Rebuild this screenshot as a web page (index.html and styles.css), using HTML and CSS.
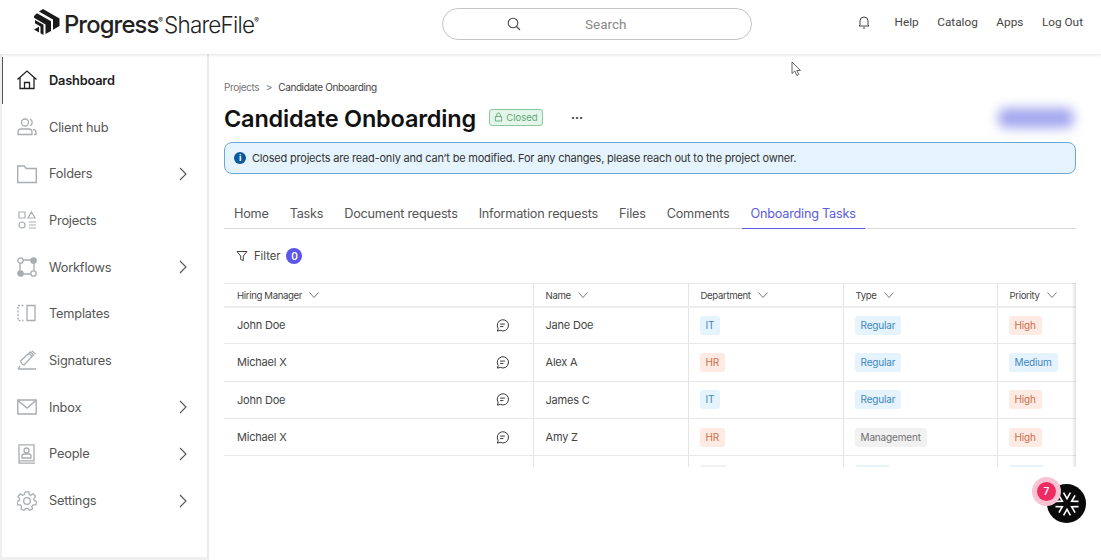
FILE: index.html
```html
<!DOCTYPE html>
<html lang="en">
<head>
    <meta charset="UTF-8">
    <meta name="viewport" content="width=device-width, initial-scale=1.0">
    <title>Candidate Onboarding</title>
    <link rel="stylesheet" href="styles.css">
</head>
<body>

    <header class="topbar">
        <div class="logo">
            <svg class="logo-mark" viewBox="0 0 26 26" width="26" height="26" fill="#1a1a1a">
                <path d="M9 0 25.500 9.500V17L19 20.800V10.500L5 2.600Z"/>
                <path d="M3 4.300 17 12.300V21.900L11.500 25V15.500L0 8.800V7Z"/>
                <path d="M1 11 9.500 15.800V26L6.500 24.300V17.500L1 14.300Z"/>
                <path d="M0 20.500 5 17.700V23.400Z"/>
            </svg>
            <span class="logo-progress">Progress</span><span class="logo-reg">®</span><span class="logo-share">ShareFile</span><span class="logo-reg">®</span>
        </div>
        <div class="search">
            <svg class="search-icon" viewBox="0 0 14 14" width="14" height="14" fill="none" stroke="#444" stroke-width="1.100">
                <circle cx="6" cy="6" r="4.800"/><path d="M9.500 9.500 13 13"/>
            </svg>
            <span class="search-text">Search</span>
        </div>
        <nav class="top-links">
            <svg class="bell" viewBox="0 0 12 14" width="12" height="14" fill="none" stroke="#444" stroke-width="1">
                <path d="M2 10V6a4 4 0 0 1 8 0v4l1 1H1ZM5 13h2"/>
            </svg>
            <a>Help</a>
            <a>Catalog</a>
            <a>Apps</a>
            <a>Log Out</a>
        </nav>
    </header>

    <div class="layout">
        <aside class="sidebar">
            <a class="nav-item active">
                <svg class="nav-icon" viewBox="0 0 20 20" fill="none" stroke="#222" stroke-width="1.300"><path d="M0.500 9.500 10 1 19.500 9.500M3 7.500V18.500H17V7.500M7.500 18.500V12.500H12.500V18.500"/></svg>
                <span>Dashboard</span>
            </a>
            <a class="nav-item">
                <svg class="nav-icon" viewBox="0 0 20 20" fill="none" stroke="#a9adb0" stroke-width="1.300"><circle cx="8" cy="5.500" r="3.500"/><path d="M1 17.500v-2.500a3 3 0 0 1 3-3h8a3 3 0 0 1 3 3v2.500ZM13 2.200a3.500 3.500 0 0 1 0 6.500M16 12.500a3 3 0 0 1 3 3v2h-2"/></svg>
                <span>Client hub</span>
            </a>
            <a class="nav-item">
                <svg class="nav-icon" viewBox="0 0 20 20" fill="none" stroke="#a9adb0" stroke-width="1.400"><path d="M0.700 2h6.500l2 2.500h10.100v14H0.700Z"/></svg>
                <span>Folders</span>
                <svg class="chevron" viewBox="0 0 8 14" fill="none" stroke="#555" stroke-width="1.100"><path d="M1 1 7 7 1 13"/></svg>
            </a>
            <a class="nav-item">
                <svg class="nav-icon" viewBox="0 0 20 20" fill="none" stroke="#a9adb0" stroke-width="1.200"><path d="M2 2h6v6H2ZM14.500 2 18 8h-7ZM12 12h7M12 15h7M12 18h7"/><circle cx="5" cy="15" r="3"/></svg>
                <span>Projects</span>
            </a>
            <a class="nav-item">
                <svg class="nav-icon" viewBox="0 0 20 20" fill="none" stroke="#a9adb0" stroke-width="1.300"><path d="M6 3h8M3 6v8M17 6v8M6 17h8"/><circle cx="3.500" cy="3.500" r="2.700"/><circle cx="16.500" cy="3.500" r="2.700" fill="#a9adb0"/><circle cx="3.500" cy="16.500" r="2.700" fill="#a9adb0"/><circle cx="16.500" cy="16.500" r="2.700"/></svg>
                <span>Workflows</span>
                <svg class="chevron" viewBox="0 0 8 14" fill="none" stroke="#555" stroke-width="1.100"><path d="M1 1 7 7 1 13"/></svg>
            </a>
            <a class="nav-item">
                <svg class="nav-icon" viewBox="0 0 20 20" fill="none" stroke="#a9adb0" stroke-width="1.300"><path d="M10 1.500h8v15h-8Z"/><path d="M6.500 1.500H1v15h5.500" stroke-dasharray="2 1.500"/></svg>
                <span>Templates</span>
            </a>
            <a class="nav-item">
                <svg class="nav-icon" viewBox="0 0 20 20" fill="none" stroke="#a9adb0" stroke-width="1.300"><path d="M5 14 3.500 11 13.500 2l3 3L7 15ZM12 3.500l3.500 3.500M15 1l3.500 3M1 19h18M1 19l2-3"/></svg>
                <span>Signatures</span>
            </a>
            <a class="nav-item">
                <svg class="nav-icon" viewBox="0 0 20 20" fill="none" stroke="#a9adb0" stroke-width="1.400"><path d="M0.800 3h18.400v14H0.800ZM1.500 4 10 11l8.500-7"/></svg>
                <span>Inbox</span>
                <svg class="chevron" viewBox="0 0 8 14" fill="none" stroke="#555" stroke-width="1.100"><path d="M1 1 7 7 1 13"/></svg>
            </a>
            <a class="nav-item">
                <svg class="nav-icon" viewBox="0 0 20 20" fill="none" stroke="#a9adb0" stroke-width="1.300"><path d="M2 0.800h15v16H2ZM2 16.800v2.400h16"/><circle cx="9.500" cy="6.500" r="2.500"/><path d="M5 14v-2a2 2 0 0 1 2-2h5a2 2 0 0 1 2 2v2Z"/></svg>
                <span>People</span>
                <svg class="chevron" viewBox="0 0 8 14" fill="none" stroke="#555" stroke-width="1.100"><path d="M1 1 7 7 1 13"/></svg>
            </a>
            <a class="nav-item">
                <svg class="nav-icon" viewBox="0 0 20 20" fill="none" stroke="#a9adb0" stroke-width="1.300"><circle cx="10" cy="10" r="3.300"/><path d="M8.300 0.800h3.400l.5 2.700 1.700.8 2.400-1.400 2.200 2.700-1.700 2.100.4 1.800 2.400 1.100-.8 3.300-2.700 0-1.200 1.500.6 2.600-3.100 1.400-1.700-2.100h-1.900l-1.700 2.100-3.100-1.400.6-2.600-1.200-1.500-2.700 0-.8-3.300 2.400-1.100.4-1.800-1.700-2.100 2.200-2.700 2.400 1.400 1.700-.8Z"/></svg>
                <span>Settings</span>
                <svg class="chevron" viewBox="0 0 8 14" fill="none" stroke="#555" stroke-width="1.100"><path d="M1 1 7 7 1 13"/></svg>
            </a>
        </aside>

        <main class="content">
            <div class="breadcrumb">
                <span class="crumb-link">Projects</span>
                <span class="crumb-sep">&gt;</span>
                <span>Candidate Onboarding</span>
            </div>

            <div class="title-row">
                <h1>Candidate Onboarding</h1>
                <span class="closed-badge">
                    <svg viewBox="0 0 10 11" width="9" height="10" fill="none" stroke="#5fa877" stroke-width="1"><path d="M1.500 5h7v5h-7ZM3 5V3a2 2 0 0 1 4 0v2"/></svg>
                    Closed
                </span>
                <span class="more">···</span>
                <div class="blurred"></div>
            </div>

            <div class="alert">
                <span class="alert-icon">i</span>
                Closed projects are read-only and can’t be modified. For any changes, please reach out to the project owner.
            </div>

            <div class="tabs">
                <a class="tab">Home</a>
                <a class="tab">Tasks</a>
                <a class="tab">Document requests</a>
                <a class="tab">Information requests</a>
                <a class="tab">Files</a>
                <a class="tab">Comments</a>
                <a class="tab selected">Onboarding Tasks</a>
            </div>

            <div class="filter">
                <svg viewBox="0 0 12 12" width="12" height="12" fill="none" stroke="#444" stroke-width="1"><path d="M1 1.500h10L7.300 6v4.500L4.700 9.500V6Z"/></svg>
                <span>Filter</span>
                <span class="filter-count">0</span>
            </div>

            <div class="table-wrap">
                <table class="grid">
                    <thead>
                        <tr>
                            <th class="col-manager">Hiring Manager <svg class="sort" viewBox="0 0 10 6"><path d="M0.500 0.500 5 5.500 9.500 0.500"/></svg></th>
                            <th class="col-name">Name <svg class="sort" viewBox="0 0 10 6"><path d="M0.500 0.500 5 5.500 9.500 0.500"/></svg></th>
                            <th class="col-dept">Department <svg class="sort" viewBox="0 0 10 6"><path d="M0.500 0.500 5 5.500 9.500 0.500"/></svg></th>
                            <th class="col-type">Type <svg class="sort" viewBox="0 0 10 6"><path d="M0.500 0.500 5 5.500 9.500 0.500"/></svg></th>
                            <th class="col-priority">Priority <svg class="sort" viewBox="0 0 10 6"><path d="M0.500 0.500 5 5.500 9.500 0.500"/></svg></th>
                        </tr>
                    </thead>
                    <tbody>
                        <tr>
                            <td><div class="manager">John Doe <svg class="comment" viewBox="0 0 12 12"><path d="M1.300 11.200 2 8.700A5.200 5.200 0 1 1 4 10.500ZM3.800 4.700h4.400M3.800 7h3"/></svg></div></td>
                            <td>Jane Doe</td>
                            <td><span class="tag blue">IT</span></td>
                            <td><span class="tag blue">Regular</span></td>
                            <td><span class="tag red">High</span></td>
                        </tr>
                        <tr>
                            <td><div class="manager">Michael X <svg class="comment" viewBox="0 0 12 12"><path d="M1.300 11.200 2 8.700A5.200 5.200 0 1 1 4 10.500ZM3.800 4.700h4.400M3.800 7h3"/></svg></div></td>
                            <td>Alex A</td>
                            <td><span class="tag red">HR</span></td>
                            <td><span class="tag blue">Regular</span></td>
                            <td><span class="tag blue">Medium</span></td>
                        </tr>
                        <tr>
                            <td><div class="manager">John Doe <svg class="comment" viewBox="0 0 12 12"><path d="M1.300 11.200 2 8.700A5.200 5.200 0 1 1 4 10.500ZM3.800 4.700h4.400M3.800 7h3"/></svg></div></td>
                            <td>James C</td>
                            <td><span class="tag blue">IT</span></td>
                            <td><span class="tag blue">Regular</span></td>
                            <td><span class="tag red">High</span></td>
                        </tr>
                        <tr>
                            <td><div class="manager">Michael X <svg class="comment" viewBox="0 0 12 12"><path d="M1.300 11.200 2 8.700A5.200 5.200 0 1 1 4 10.500ZM3.800 4.700h4.400M3.800 7h3"/></svg></div></td>
                            <td>Amy Z</td>
                            <td><span class="tag red">HR</span></td>
                            <td><span class="tag gray">Management</span></td>
                            <td><span class="tag red">High</span></td>
                        </tr>
                        <!-- row cut off by the scroll area -->
                        <tr>
                            <td></td>
                            <td></td>
                            <td><span class="tag gray">&nbsp;&nbsp;&nbsp;&nbsp;&nbsp;&nbsp;</span></td>
                            <td><span class="tag blue">&nbsp;&nbsp;&nbsp;&nbsp;&nbsp;&nbsp;&nbsp;&nbsp;&nbsp;</span></td>
                            <td><span class="tag blue">&nbsp;&nbsp;&nbsp;&nbsp;&nbsp;&nbsp;&nbsp;&nbsp;&nbsp;</span></td>
                        </tr>
                    </tbody>
                </table>
                <div class="edge-shadow"></div>
            </div>
        </main>
    </div>

    <!-- mouse pointer caught in the screenshot -->
    <svg class="pointer" viewBox="0 0 12 16" width="12" height="16" fill="#fff" stroke="#444" stroke-width="0.800"><path d="M1 1V12.500L3.800 10 5.800 14.500 7.800 13.500 5.800 9.500H9.500Z"/></svg>

    <div class="assistant">
        <svg viewBox="0 0 26 26" width="28" height="28" fill="none" stroke="#fff" stroke-width="1.500">
            <path d="M9.800 2.500 13 8 16.200 2.500"/>
            <path d="M9.800 2.500 13 8 16.200 2.500" transform="rotate(60 13 13)"/>
            <path d="M9.800 2.500 13 8 16.200 2.500" transform="rotate(120 13 13)"/>
            <path d="M9.800 2.500 13 8 16.200 2.500" transform="rotate(180 13 13)"/>
            <path d="M9.800 2.500 13 8 16.200 2.500" transform="rotate(240 13 13)"/>
            <path d="M9.800 2.500 13 8 16.200 2.500" transform="rotate(300 13 13)"/>
        </svg>
        <span class="assistant-count">7</span>
    </div>

</body>
</html>
```

FILE: styles.css
```css
* {
    box-sizing: border-box;
}

body {
    font-family: 'Inter', sans-serif;
    background-color: #fff;
    color: #333;
    margin: 0;
    height: 560px;
    overflow: hidden;
}

/* top bar */
.topbar {
    height: 54px;
    display: flex;
    align-items: center;
    background-color: #fff;
    box-shadow: 0 1px 3px rgba(0, 0, 0, 0.12);
    position: relative;
    z-index: 2;
}

.logo {
    width: 442px;
    padding-left: 34px;
    padding-bottom: 6px;
    display: flex;
    align-items: center;
    color: #222;
    white-space: nowrap;
}

.logo-mark {
    margin-right: 4px;
    margin-top: -4px;
}

.logo-progress {
    font-size: 23.800px;
    font-weight: 500;
    letter-spacing: -0.900px;
}

.logo-share {
    font-size: 22.500px;
    font-weight: 300;
    letter-spacing: -0.800px;
    margin-left: 1px;
}

.logo-reg {
    font-size: 7px;
    align-self: flex-start;
    margin-top: 6px;
}

.search {
    width: 310px;
    height: 32px;
    margin-top: -6px;
    border: 1px solid #c4c4c4;
    border-radius: 16px;
    display: flex;
    align-items: center;
    padding-left: 64px;
}

.search-text {
    margin-left: 64px;
    font-family: 'Roboto', sans-serif;
    font-size: 13.500px;
    color: #888;
}

.top-links {
    margin-left: auto;
    margin-right: 18px;
    margin-top: -11px;
    display: flex;
    align-items: center;
    font-family: 'Roboto', sans-serif;
    font-size: 11.800px;
    color: #444;
    gap: 18.500px;
}

.bell {
    margin-right: 6px;
}

/* page body */
.layout {
    display: flex;
    height: 506px;
}

.sidebar {
    width: 209px;
    height: 506px;
    padding-top: 3px;
    border-left: 2px solid #efefef;
    border-right: 2px solid #e9e9e9;
    border-bottom: 3px solid #efefef;
    flex-shrink: 0;
}

.nav-item {
    height: 46.700px;
    display: flex;
    align-items: center;
    padding-left: 15px;
    padding-right: 20px;
    font-size: 12.800px;
    letter-spacing: -0.200px;
    color: #555;
}

.nav-item.active {
    color: #222;
    font-weight: 600;
    padding-left: 14px;
    border-left: 1px solid #555;
}

.nav-icon {
    width: 20px;
    height: 20px;
    margin-right: 12px;
    flex-shrink: 0;
}

.chevron {
    width: 8px;
    height: 14px;
    margin-left: auto;
}

.content {
    flex: 1;
    padding: 26px 25px 0 15px;
    min-width: 0;
}

.breadcrumb {
    font-size: 10px;
    letter-spacing: -0.400px;
    line-height: 14px;
    color: #444;
}

.crumb-link {
    color: #777;
}

.crumb-sep {
    color: #777;
    margin: 0 4px;
}

.title-row {
    display: flex;
    align-items: center;
    height: 34px;
    margin-top: 7px;
}

h1 {
    margin: 0;
    font-size: 23.500px;
    font-weight: 600;
    color: #111;
    letter-spacing: -0.200px;
}

.closed-badge {
    margin-left: 13px;
    margin-top: -2px;
    height: 17px;
    width: 54px;
    display: flex;
    align-items: center;
    justify-content: center;
    gap: 3px;
    font-size: 9.500px;
    color: #5fa877;
    background-color: #e4f5e9;
    border: 1px solid #8cc79f;
    border-radius: 3px;
}

.more {
    margin-left: 28px;
    margin-top: -2px;
    font-size: 12px;
    font-weight: 700;
    color: #333;
}

.blurred {
    margin-left: auto;
    margin-right: 2px;
    width: 76px;
    height: 20px;
    background-color: #a3a7ee;
    border-radius: 8px;
    filter: blur(6px);
}

.alert {
    margin-top: 7px;
    height: 32px;
    display: flex;
    align-items: center;
    gap: 6px;
    padding-left: 9px;
    font-size: 11px;
    letter-spacing: -0.200px;
    color: #333;
    background-color: #e5f3fd;
    border: 1px solid #6aa9d8;
    border-radius: 8px;
}

.alert-icon {
    width: 12px;
    height: 12px;
    border-radius: 50%;
    background-color: #0b5a9e;
    color: #fff;
    font-size: 9px;
    font-weight: 700;
    text-align: center;
    line-height: 12px;
}

.tabs {
    margin-top: 24px;
    height: 31px;
    display: flex;
    gap: 3px;
    padding-left: 1px;
    border-bottom: 1px solid #d8d8d8;
}

.tab {
    padding: 7px 9px 0;
    font-size: 12.700px;
    letter-spacing: -0.230px;
    line-height: 18px;
    color: #555;
    white-space: nowrap;
}

.tab.selected {
    color: #5b5be0;
    border-bottom: 1px solid #5b5be0;
    height: 31px;
}

.filter {
    display: flex;
    align-items: center;
    height: 16px;
    margin-top: 19px;
    padding-left: 12px;
    gap: 6px;
    font-size: 11.200px;
    color: #444;
}

.filter-count {
    width: 16px;
    height: 16px;
    border-radius: 50%;
    background-color: #5b55e8;
    color: #fff;
    font-size: 10px;
    font-weight: 600;
    text-align: center;
    line-height: 16px;
}

/* table, clipped by its scroll area */
.table-wrap {
    margin-top: 19px;
    height: 184px;
    overflow: hidden;
    position: relative;
}

.grid {
    width: 852px;
    table-layout: fixed;
    border-collapse: collapse;
    font-size: 11px;
    letter-spacing: -0.200px;
}

.grid th {
    height: 23px;
    padding: 1px 0 0 12px;
    text-align: left;
    font-weight: 400;
    font-size: 9.600px;
    letter-spacing: -0.350px;
    color: #444;
    border-top: 1px solid #e8e8e8;
    border-bottom: 2px solid #eee;
    border-left: 1px solid #e4e4e4;
}

.grid td {
    height: 37.300px;
    padding: 0 0 0 12px;
    color: #444;
    border-bottom: 1px solid #e8e8e8;
    border-left: 1px solid #e4e4e4;
}

.grid th:first-child,
.grid td:first-child {
    border-left: none;
    padding-left: 13px;
}

.col-manager { width: 309px; }
.col-name { width: 155px; }
.col-dept { width: 155px; }
.col-type { width: 154px; }
.col-priority { width: 79px; }

.sort {
    width: 10px;
    height: 6px;
    margin-left: 5px;
    fill: none;
    stroke: #555;
    stroke-width: 0.800;
    vertical-align: 1px;
}

.manager {
    display: flex;
    align-items: center;
    justify-content: space-between;
    padding-right: 24px;
}

.comment {
    width: 13px;
    height: 13px;
    fill: none;
    stroke: #333;
    stroke-width: 0.900;
}

.tag {
    display: inline-block;
    padding: 0 6px;
    height: 19px;
    line-height: 19px;
    border-radius: 3px;
    font-size: 10px;
    letter-spacing: -0.150px;
    margin-left: -1px;
}

.tag.blue {
    background-color: #e5f3fd;
    color: #3d86bd;
}

.tag.red {
    background-color: #fdeae2;
    color: #cf6d4c;
}

.tag.gray {
    background-color: #f1f1f1;
    color: #707070;
}

.edge-shadow {
    position: absolute;
    top: 0;
    right: 0;
    bottom: 0;
    width: 4px;
    background: linear-gradient(to right, rgba(0, 0, 0, 0), rgba(0, 0, 0, 0.12));
}

/* things lying over the page */
.pointer {
    position: absolute;
    left: 791px;
    top: 61px;
}

.assistant {
    position: absolute;
    left: 1047px;
    top: 484px;
    width: 39px;
    height: 39px;
    border-radius: 50%;
    background-color: #0a0a0a;
    display: flex;
    align-items: center;
    justify-content: center;
}

.assistant-count {
    position: absolute;
    left: -10px;
    top: -2px;
    width: 19px;
    height: 19px;
    border-radius: 50%;
    background-color: #ee2b63;
    box-shadow: 0 0 0 5px #f9c3d4;
    color: #fff;
    font-size: 10px;
    font-weight: 600;
    text-align: center;
    line-height: 19px;
}
```
